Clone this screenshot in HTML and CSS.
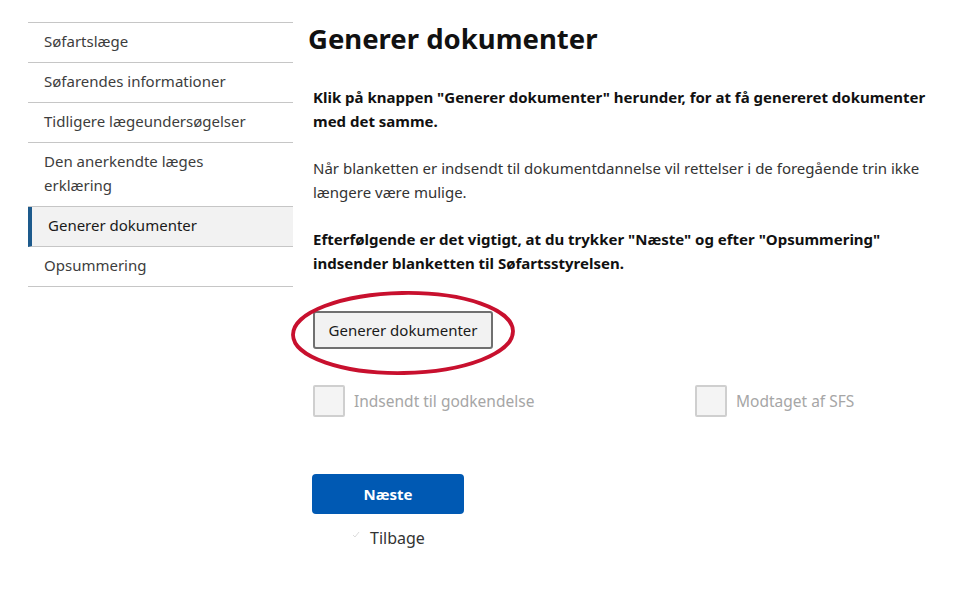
FILE: index.html
```html
<!DOCTYPE html>
<html lang="da">
<head>
<meta charset="utf-8">
<title>Generer dokumenter</title>
<link rel="stylesheet" href="styles.css">
</head>
<body>
<div class="page">
  <nav class="sidenav">
    <a class="nav-item">Søfartslæge</a>
    <a class="nav-item">Søfarendes informationer</a>
    <a class="nav-item">Tidligere lægeundersøgelser</a>
    <a class="nav-item">Den anerkendte læges erklæring</a>
    <a class="nav-item active">Generer dokumenter</a>
    <a class="nav-item">Opsummering</a>
  </nav>
  <main class="content">
    <h1 class="title">Generer dokumenter</h1>
    <p class="para bold">Klik på knappen "Generer dokumenter" herunder, for at få genereret dokumenter med det samme.</p>
    <p class="para">Når blanketten er indsendt til dokumentdannelse vil rettelser i de foregående trin ikke længere være mulige.</p>
    <p class="para bold">Efterfølgende er det vigtigt, at du trykker "Næste" og efter "Opsummering" indsender blanketten til Søfartsstyrelsen.</p>
    <div class="gen-wrap">
      <button class="gen-btn">Generer dokumenter</button>
      <svg class="circle" width="230" height="90" viewBox="0 0 230 90"><ellipse cx="112" cy="44" rx="110" ry="40" fill="none" stroke="#c8102e" stroke-width="3.8" transform="rotate(-1 112 44)"/></svg>
    </div>
    <div class="checks">
      <label class="check first"><span class="box"></span><span class="check-label">Indsendt til godkendelse</span></label>
      <label class="check"><span class="box"></span><span class="check-label">Modtaget af SFS</span></label>
    </div>
    <div class="actions">
      <button class="next-btn">Næste</button>
      <a class="back"><svg class="chev" width="8" height="8" viewBox="0 0 8 8"><path d="M1 4 L3 6 L7 1" fill="none" stroke="#dcdcdc" stroke-width="1"/></svg>Tilbage</a>
    </div>
  </main>
</div>
</body>
</html>
```
FILE: styles.css
```css
* { box-sizing: border-box; }
html, body { margin: 0; padding: 0; background: #fff; }
body {
  font-family: "Noto Sans", "Open Sans", "Liberation Sans", sans-serif;
  color: #1a1a1a;
}
.page {
  display: flex;
  padding: 22px 0 0 28px;
}
.sidenav {
  width: 265px;
  flex: none;
  border-top: 1px solid #c6c6c6;
  display: flex;
  flex-direction: column;
}
.nav-item {
  display: block;
  padding: 6px 30px 9px 16px;
  border-bottom: 1px solid #c6c6c6;
  font-size: 15px;
  line-height: 24px;
  color: #3d3d3d;
}
.nav-item.active {
  background: #f2f2f2;
  border-left: 4px solid #1d5a8c;
  color: #1a1a1a;
}
.content {
  flex: 1;
  min-width: 0;
  padding-left: 15px;
  padding-right: 28px;
}
.title {
  margin: -1px 0 28px 0;
  font-size: 27.5px;
  font-weight: 700;
  line-height: 36px;
  color: #111;
}
.para {
  margin: 0 0 23px 5px;
  font-size: 15px;
  line-height: 24px;
  color: #333;
}
.para.bold { font-weight: 700; color: #111; }
.gen-wrap {
  position: relative;
  margin: 36px 0 0 5px;
  height: 38px;
}
.gen-btn {
  height: 38px;
  width: 180px;
  background: #f2f2f2;
  border: 2px solid #707070;
  border-radius: 3px;
  font-family: inherit;
  font-size: 15px;
  color: #1a1a1a;
  padding: 0;
}
.circle {
  position: absolute;
  left: -22px;
  top: -22px;
  pointer-events: none;
}
.checks {
  display: flex;
  margin: 36px 0 0 5px;
}
.check {
  display: flex;
  align-items: center;
}
.check.first { width: 382px; }
.box {
  width: 32px;
  height: 32px;
  border: 2px solid #cfcfcf;
  background: #f4f4f4;
  border-radius: 2px;
  margin-right: 9px;
}
.check-label {
  font-size: 15.5px;
  color: #a6a6a6;
}
.actions {
  margin: 57px 0 0 4px;
  display: flex;
  flex-direction: column;
  align-items: flex-start;
}
.next-btn {
  width: 152px;
  height: 40px;
  background: #0059b3;
  border: none;
  border-radius: 4px;
  color: #fff;
  font-family: inherit;
  font-weight: 700;
  font-size: 15px;
}
.back {
  display: flex;
  align-items: center;
  margin: 13px 0 0 40px;
  font-size: 16px;
  color: #333;
}
.chev { margin-right: 10px; margin-top: -6px; }
```
